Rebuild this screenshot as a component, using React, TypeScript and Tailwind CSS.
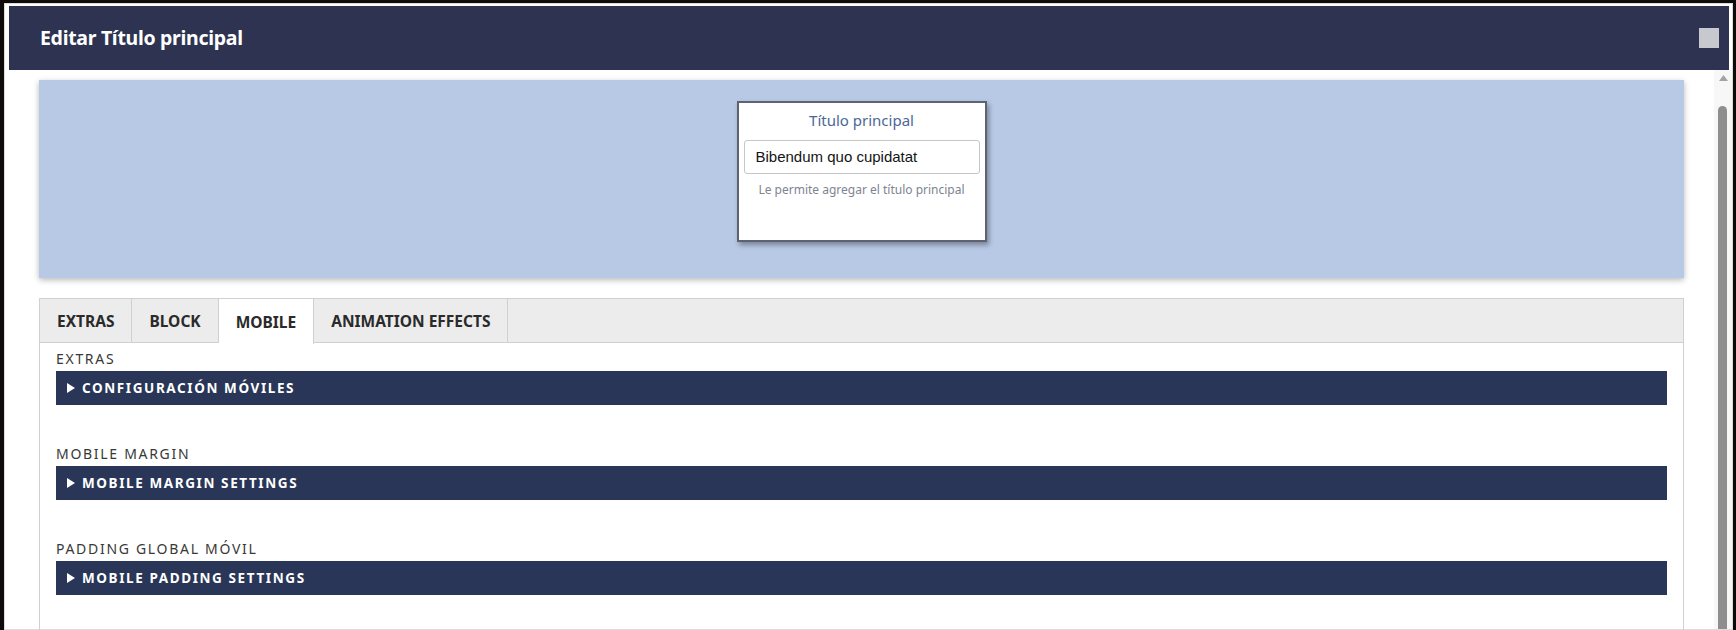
import React from 'react';

const sections = [
  { label: 'EXTRAS', title: 'CONFIGURACIÓN MÓVILES' },
  { label: 'MOBILE MARGIN', title: 'MOBILE MARGIN SETTINGS' },
  { label: 'PADDING GLOBAL MÓVIL', title: 'MOBILE PADDING SETTINGS' },
];

const tabs = ['EXTRAS', 'BLOCK', 'MOBILE', 'ANIMATION EFFECTS'];

const App = () => {
  return (
    <div
      className="w-full h-[630px] overflow-hidden bg-[#0e0b0a] pt-[3px] pl-[4px] pr-[3px]"
      style={{ fontFamily: '"Noto Sans", sans-serif' }}
    >
      <div className="h-full flex flex-col bg-white border border-[#dcdcdc]">
        {/* Header */}
        <div className="pt-[2px] pl-[4px] pr-[3px]">
          <div className="h-[64px] bg-[#2d3350] flex items-center justify-between pl-[31px] pr-[10px]">
            <h1 className="text-white text-[19.5px] font-bold leading-none tracking-[-0.3px]">Editar Título principal</h1>
            <div className="w-[20px] h-[20px] bg-[#c8c9cf]" />
          </div>
        </div>

        {/* Body */}
        <div className="flex-1 flex min-h-0">
          <div className="flex-1 pl-[34px] pr-[30px] pt-[10px]">
            {/* Preview */}
            <div className="h-[198px] bg-[#b8c9e6] shadow-[0_2px_6px_rgba(0,0,0,0.28)] flex justify-center pt-[21px]">
              <div className="w-[250px] h-[141px] bg-white border-2 border-[#5d6371] shadow-[2px_3px_5px_rgba(0,0,0,0.35)] flex flex-col items-center px-[5px]">
                <div className="text-[#4a6897] text-[15px] leading-none mt-[10px]">Título principal</div>
                <div className="w-full h-[34px] mt-[12px] border border-[#c6c6c6] rounded-[3px] flex items-center px-[11px]">
                  <span className="text-[#141414] text-[15px]" style={{ fontFamily: '"Liberation Sans", Arial, sans-serif' }}>
                    Bibendum quo cupidatat
                  </span>
                </div>
                <div className="text-[#7b8591] text-[12px] leading-none mt-[10px]">Le permite agregar el título principal</div>
              </div>
            </div>

            {/* Tabs */}
            <div className="mt-[20px] border border-[#d0d0d0] h-[400px]">
              <div className="flex h-[44px] bg-[#ececec] border-b border-[#d0d0d0]">
                {tabs.map((tab) => (
                  <div
                    key={tab}
                    className={`px-[17px] pt-[3px] flex items-center text-[15.5px] font-bold text-[#2a2a2a] border-r border-[#d0d0d0] ${
                      tab === 'MOBILE' ? 'bg-white h-[45px]' : ''
                    }`}
                  >
                    {tab}
                  </div>
                ))}
              </div>
              <div className="px-[16px] pt-[8px]">
                {sections.map((s) => (
                  <div key={s.label} className="mb-[41px]">
                    <div className="text-[14px] leading-[16px] tracking-[1.7px] text-[#383838] mb-[4px]">{s.label}</div>
                    <div className="h-[34px] bg-[#293657] flex items-center pl-[11px] gap-[7px]">
                      <svg width="8" height="10" viewBox="0 0 8 10">
                        <polygon points="0,0 8,5 0,10" fill="#ffffff" />
                      </svg>
                      <span className="text-white text-[13.5px] font-bold tracking-[1.6px]">{s.title}</span>
                    </div>
                  </div>
                ))}
              </div>
            </div>
          </div>

          {/* Scrollbar */}
          <div className="w-[18px] bg-[#f7f7f7] flex flex-col items-center pt-[5px]">
            <svg width="9" height="6" viewBox="0 0 9 6">
              <polygon points="4.5,0 9,6 0,6" fill="#a3a3a3" />
            </svg>
            <div className="w-[9px] flex-1 mt-[25px] bg-[#8e8e8e] rounded-t-full -ml-[1px]" />
          </div>
        </div>
      </div>
    </div>
  );
};

export default App;
